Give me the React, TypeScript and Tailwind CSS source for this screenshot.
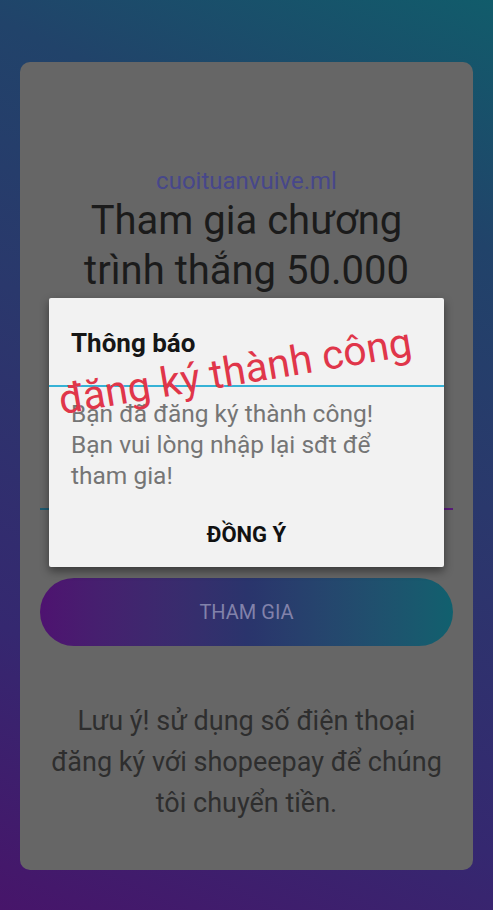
import React from "react";

export default function App() {
  return (
    <div
      className="relative w-[493px] h-[910px] overflow-hidden bg-[linear-gradient(25deg,#47156a_0%,#352870_25%,#2a386c_55%,#21436a_78%,#115c6b_100%)]"
      style={{ fontFamily: "Roboto, 'Noto Sans', sans-serif" }}
    >
      <div className="pt-[62px] px-[20px]">
        {/* card, dimmed by the dialog */}
        <div className="h-[808px] rounded-[10px] bg-[#666666] px-[20px] pt-[104px] flex flex-col items-center">
          <div className="text-[24px] leading-[30px] text-[#47478a]">cuoituanvuive.ml</div>
          <div className="text-[40px] leading-[50px] text-[#1b1b1b] text-center">
            Tham gia chương
            <br />
            trình thắng 50.000
          </div>
          <div className="mt-[212px] w-full h-[2px] bg-linear-to-r from-[#1c5a70] to-[#5a1a7a]" />
          <div className="mt-[68px] w-full h-[68px] rounded-full bg-linear-to-r from-[#4e1270] via-[#2a346c] to-[#10606e] flex items-center justify-center">
            <span className="text-[20px] text-[#8282aa]">THAM GIA</span>
          </div>
          <div className="mt-[55px] text-[27px] leading-[41px] text-[#2e2e2e] text-center">
            Lưu ý! sử dụng số điện thoại
            <br />
            đăng ký với shopeepay để chúng
            <br />
            tôi chuyển tiền.
          </div>
        </div>
      </div>

      {/* alert dialog */}
      <div className="absolute left-[49px] top-[298px] w-[395px] h-[269px] bg-[#f2f2f2] rounded-[2px] shadow-[0_4px_10px_rgba(0,0,0,0.45)] flex flex-col">
        <div className="h-[87px] px-[22px] pt-[28px]">
          <div className="text-[26px] leading-[34px] font-bold text-[#161616]">Thông báo</div>
        </div>
        <div className="h-[2px] bg-[#36b2d6]" />
        <div className="px-[22px] pt-[11px] text-[24.5px] leading-[31px] text-[#757575]">
          Bạn đã đăng ký thành công!
          <br />
          Bạn vui lòng nhập lại sđt để
          <br />
          tham gia!
        </div>
        <div className="mt-auto h-[46px] flex items-start justify-center">
          <span className="text-[22px] leading-[28px] font-bold text-[#111111]">ĐỒNG Ý</span>
        </div>
      </div>

      {/* red stamp text */}
      <div className="absolute left-[235px] top-[371px] -translate-x-1/2 -translate-y-1/2 -rotate-[9.5deg] whitespace-nowrap text-[41px] leading-[46px] text-[#e0364a]">
        đăng ký thành công
      </div>
    </div>
  );
}
